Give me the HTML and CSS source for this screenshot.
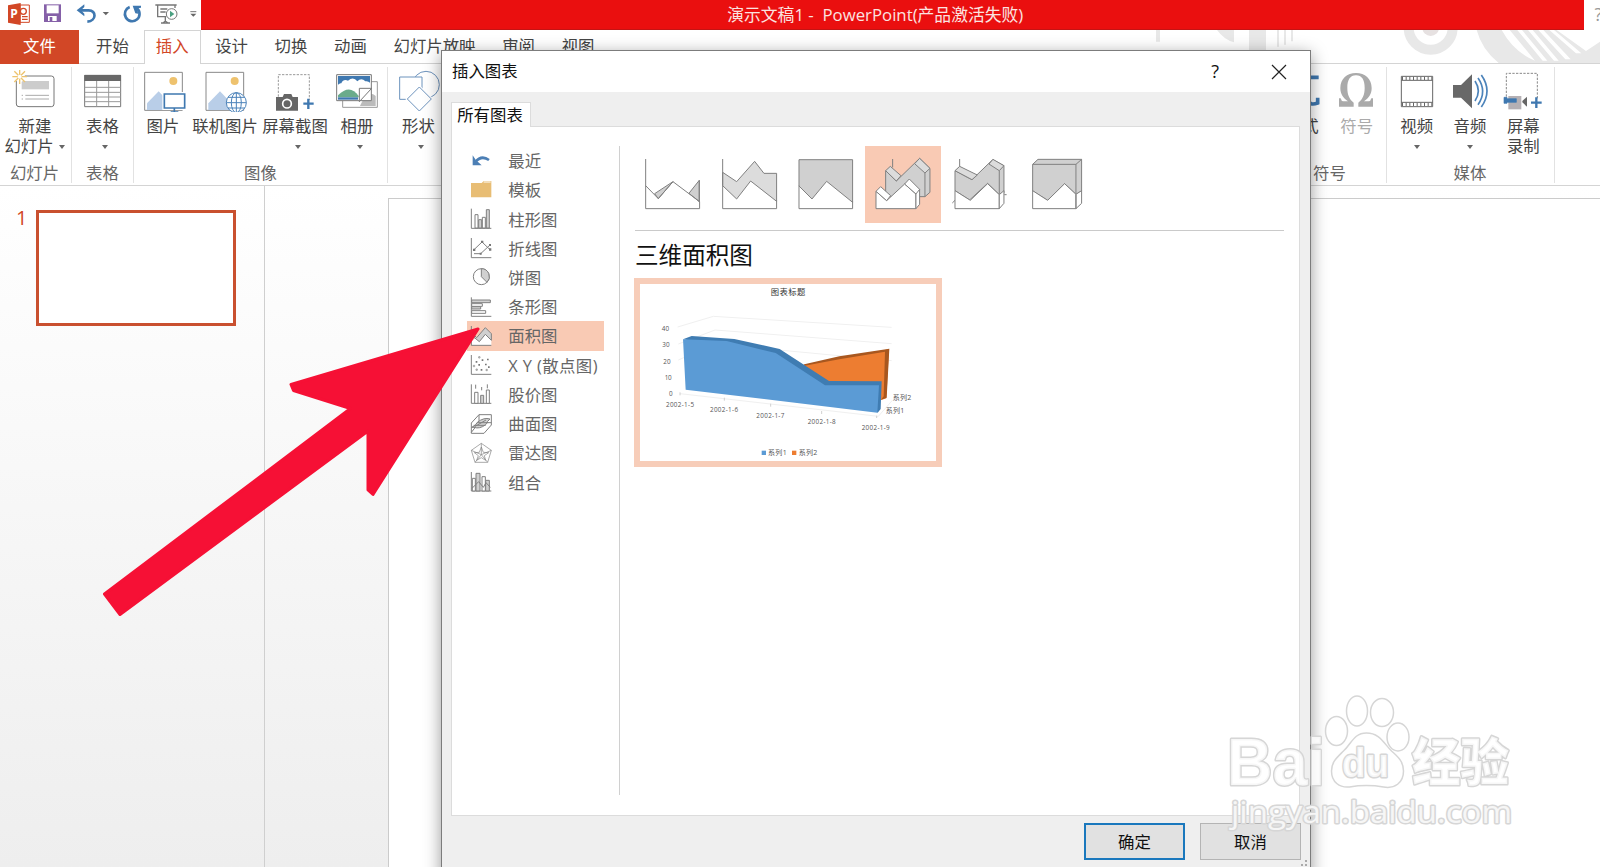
FILE: index.html
```html
<!DOCTYPE html>
<html lang="zh-CN">
<head>
    <meta charset="UTF-8">
    <meta name="viewport" content="width=device-width, initial-scale=1.0">
    <title>演示文稿1 - PowerPoint</title>
    <link rel="stylesheet" href="styles.css">
</head>
<body>
    <div class="app">
        <div class="titlebar">
            <div class="quick-access">
                <svg width="30" height="30" viewBox="18 0 90 90"><path d="M60 15h28v52H60z" fill="#fff" stroke="#d24726" stroke-width="3"/><circle cx="70" cy="34" r="9" fill="none" stroke="#d24726" stroke-width="4"/><path d="M66 50h17M66 58h17" stroke="#d24726" stroke-width="4"/><path d="M24 16l38-7v66l-38-7z" fill="#d24726"/><text x="31" y="54" class="logo-letter">P</text></svg>
                <svg width="34" height="30" viewBox="108 0 102 90"><path d="M132 13h51v53h-51z" fill="#8560a8"/><path d="M140 16h36v24h-36z" fill="#fff"/><path d="M144 48h26v15h-26z" fill="#fff"/><path d="M149 51h8v12h-8z" fill="#8560a8"/></svg>
                <svg width="45" height="30" viewBox="210 0 135 90"><path d="M238 31h28c24 0 24 32-4 34" fill="none" stroke="#3f78b0" stroke-width="8"/><path d="M230 31l23-18v8l-10 10 10 10v8z" fill="#3f78b0"/><path d="M308 36h19l-9.500 10z" fill="#666"/></svg>
                <svg width="33" height="30" viewBox="345 0 99 90"><path d="M389 21a22 22 0 1 0 22 4" fill="none" stroke="#3f78b0" stroke-width="8"/><path d="M398 17h25v6l-10 2 1 16-8-1z" fill="#3f78b0"/></svg>
                <svg width="37" height="30" viewBox="444 0 111 90"><path d="M466 15h64M473 16v34h26M525 16v8M481 27h21M481 36h16M496 51v13M483 69h27M489 69l7-6 8 6" fill="none" stroke="#777" stroke-width="4"/><circle cx="515" cy="42" r="16" fill="#fff" stroke="#777" stroke-width="3"/><path d="M510 32l13 10-13 10z" fill="#4ba182"/></svg>
                <svg width="16" height="30" viewBox="555 0 48 90"><path d="M571 35h18" stroke="#777" stroke-width="3"/><path d="M571 41h18l-9 9z" fill="#666"/></svg>
            </div>
            <div class="window-title">演示文稿1 -  PowerPoint(产品激活失败)</div>
            <div class="window-help">?</div>
        </div>

        <div class="tabs">
            <svg class="tabs-art" width="460" height="33" viewBox="0 90 460 99" preserveAspectRatio="none">
                <g fill="#e8e8e8">
                    <path d="M16 90h4v35h-4zM77 90h17v37q-10-8-17-37zM109 90h17v60h-17zM137 90h2v50h-2zM144 90h2v44h-2zM151 90h2v34h-2z"/>
                </g>
            </svg>
            <svg class="tabs-art" width="220" height="33" viewBox="0 90 660 99">
                <circle cx="152" cy="83" r="66" fill="none" stroke="#e8e8e8" stroke-width="30"/>
                <circle cx="152" cy="83" r="25" fill="#e6e1e1"/>
                <path d="M290 90q15 58 66 99h304v-64l-42 28-88-63z" fill="#e8e8e8"/>
                <path d="M365 90h24l76 92q-64-26-100-92zM412 90h14l76 92h-14zM444 90h14l78 92h-14zM475 90h15l82 88h-16zM508 90h14l82 70h-16z" fill="#fff"/>
            </svg>
            <div class="tab tab-file">文件</div>
            <div class="tab">开始</div>
            <div class="tab tab-active">插入</div>
            <div class="tab">设计</div>
            <div class="tab">切换</div>
            <div class="tab">动画</div>
            <div class="tab">幻灯片放映</div>
            <div class="tab">审阅</div>
            <div class="tab">视图</div>
        </div>

        <div class="ribbon">
            <div class="group group-slides">
                <div class="group-buttons">
                    <div class="tool">
                        <svg viewBox="34 210 144 126"><rect x="50" y="228" width="113" height="92" rx="8" fill="#fff" stroke="#777" stroke-width="3"/><path d="M66 243h82v25H66z" fill="#ccc"/><path d="M66 286h4M77 286h71M66 297h4M77 297h71" stroke="#aaa" stroke-width="3"/><circle cx="60" cy="230" r="16" fill="#fff"/><path d="M60 208v44M38 230h44M44 214l32 32M76 214l-32 32" stroke="#edc36d" stroke-width="4"/><circle cx="60" cy="230" r="6" fill="#fff"/></svg>
                        <span>新建</span>
                        <span class="wide-label">幻灯片<i class="caret caret-inline"></i></span>
                    </div>
                </div>
                <div class="group-name">幻灯片</div>
            </div>
            <div class="group group-table">
                <div class="group-buttons">
                    <div class="tool">
                        <svg viewBox="236 210 144 126"><path d="M253 226h108v94H253z" fill="#fff" stroke="#777" stroke-width="3"/><path d="M252 225h110v18H252z" fill="#686868"/><path d="M289 243v77M325 243v77M253 262h108M253 277h108M253 291h108M253 305h108" stroke="#999" stroke-width="3"/></svg>
                        <span>表格</span>
                        <i class="caret"></i>
                    </div>
                </div>
                <div class="group-name">表格</div>
            </div>
            <div class="group group-image">
                <div class="group-buttons">
                    <div class="tool tool-picture">
                        <svg viewBox="417 210 144 126"><path d="M434 217h113v114H434z" fill="#fff" stroke="#888" stroke-width="3"/><circle cx="520" cy="243" r="12" fill="#eec26e"/><path d="M441 330v-20l35-36 34 36v20z" fill="#b9cee8"/><path d="M492 281h63v44h-63z" fill="#fff" stroke="#fff" stroke-width="10"/><path d="M493 282h61v42h-61zM523 324v11M512 336h23" fill="none" stroke="#3f78b0" stroke-width="5"/></svg>
                        <span>图片</span>
                    </div>
                    <div class="tool tool-online">
                        <svg viewBox="603 210 144 126"><path d="M618 217h113v114H618z" fill="#fff" stroke="#888" stroke-width="3"/><circle cx="704" cy="243" r="12" fill="#eec26e"/><path d="M625 330v-20l35-36 34 36v20z" fill="#b9cee8"/><circle cx="709" cy="308" r="30" fill="#fff" stroke="#4c83ba" stroke-width="3"/><path d="M679 308h60M709 278v60M684 292h50M684 324h50" stroke="#4c83ba" stroke-width="3"/><ellipse cx="709" cy="308" rx="15" ry="30" fill="none" stroke="#4c83ba" stroke-width="3"/></svg>
                        <span>联机图片</span>
                    </div>
                    <div class="tool tool-shot">
                        <svg viewBox="813 210 144 126"><path d="M835 290v-66h93v76" fill="none" stroke="#999" stroke-width="3" stroke-dasharray="7 4"/><path d="M828 291h20l4-9h22l4 9h16v41h-66z" fill="#666"/><circle cx="861" cy="311" r="13" fill="#666" stroke="#fff" stroke-width="5"/><path d="M910 311h31M925 296v31" stroke="#3f78b0" stroke-width="7"/></svg>
                        <span>屏幕截图</span>
                        <i class="caret"></i>
                    </div>
                    <div class="tool tool-album">
                        <svg viewBox="999 210 144 126"><path d="M1028 245h104v77h-104z" fill="#fff" stroke="#999" stroke-width="3"/><path d="M1080 318c15-35 30-45 47-30v30z" fill="#bbb"/><path d="M1010 224h104v78h-104z" fill="#fff" stroke="#777" stroke-width="3"/><path d="M1014 228h96v20q-6-6-14-4-12-12-24 0-12-16-28-2-14-6-20 8-4-2-10 4z" fill="#3f78b0"/><path d="M1014 286c25-25 45-22 62 2v4h-62z" fill="#6aab8b"/><path d="M1014 292h60v7h-60z" fill="#3f78b0"/><path d="M1078 305v-40h37z" fill="#fff" stroke="#777" stroke-width="3"/></svg>
                        <span>相册</span>
                        <i class="caret"></i>
                    </div>
                </div>
                <div class="group-name">图像</div>
            </div>
            <div class="group group-shapes">
                <div class="group-buttons">
                    <div class="tool">
                        <svg viewBox="1182 210 144 126"><circle cx="1275" cy="254" r="40" fill="#fff" stroke="#6d93bd" stroke-width="3"/><path d="M1196 231h67v67h-67z" fill="#fff" stroke="#6d93bd" stroke-width="3"/><path d="M1255 261l36 36-36 36-36-36z" fill="#fff" stroke="#fff" stroke-width="9"/><path d="M1255 261l36 36-36 36-36-36z" fill="#fff" stroke="#6d93bd" stroke-width="3"/></svg>
                        <span>形状</span>
                        <i class="caret"></i>
                    </div>
                </div>
            </div>
            <div class="group group-symbols">
                <div class="group-buttons">
                    <div class="tool">
                        <svg viewBox="414 210 144 126"><path d="M440 232h96M466 232v86M505 232v65q2 22 28 12v-16" fill="none" stroke="#3f78b0" stroke-width="11"/></svg>
                        <span>公式</span>
                    </div>
                    <div class="tool tool-disabled">
                        <svg viewBox="578 210 144 126"><path d="M596 320v-25h5q2 9 8 9h14c-14-10-23-22-23-40 0-28 20-45 47-45s47 17 47 45c0 18-9 30-23 40h14q6 0 8-9h5v25h-44v-12c13-10 19-24 19-44 0-24-8-38-26-38s-26 14-26 38c0 20 6 34 19 44v12z" fill="#aaa"/></svg>
                        <span>符号</span>
                    </div>
                </div>
                <div class="group-name">符号</div>
            </div>
            <div class="group group-media">
                <div class="group-buttons">
                    <div class="tool">
                        <svg viewBox="759 210 144 126"><path d="M784 229h94v91h-94zM784 241h94M784 307h94" fill="#fff" stroke="#666" stroke-width="3"/><path d="M786 235h90M786 313h90" stroke="#666" stroke-width="10" stroke-dasharray="3 8"/></svg>
                        <span>视频</span>
                        <i class="caret caret-media"></i>
                    </div>
                    <div class="tool">
                        <svg viewBox="918 210 144 126"><path d="M939 255h24l33-32v102l-33-32h-24z" fill="#686868"/><path d="M1005 243q20 30 0 60M1014 234q28 40 0 80M1024 225q34 48 0 96" fill="none" stroke="#4c83ba" stroke-width="5"/></svg>
                        <span>音频</span>
                        <i class="caret caret-media"></i>
                    </div>
                    <div class="tool">
                        <svg viewBox="1077 210 144 126"><path d="M1099 290v-70h93v76" fill="none" stroke="#888" stroke-width="3" stroke-dasharray="7 4"/><path d="M1105 288h39v40h-39z" fill="#b5b0b4"/><path d="M1092 292h9v4h28v11h-28v3h-9z" fill="#3f78b0" stroke="#3f78b0" stroke-width="2"/><path d="M1147 303l14-13v30l-14-13z" fill="#666"/><path d="M1173 308h32M1189 292v32" stroke="#3f78b0" stroke-width="7"/></svg>
                        <span>屏幕</span>
                        <span>录制</span>
                    </div>
                </div>
                <div class="group-name">媒体</div>
            </div>
        </div>

        <div class="workspace">
            <div class="slide-list">
                <div class="slide-number">1</div>
                <div class="slide-thumb"></div>
            </div>
            <div class="stage">
                <div class="slide"></div>
            </div>
        </div>

        <div class="dialog">
            <div class="dialog-title">
                <div class="dialog-name">插入图表</div>
                <div class="dialog-help">?</div>
                <svg class="dialog-close" width="16" height="16" viewBox="0 0 16 16"><path d="M1 1l14 14M15 1L1 15" stroke="#222" stroke-width="1.2"/></svg>
            </div>
            <div class="dialog-tab">所有图表</div>
            <div class="panel">
                <div class="type-list">
                    <div class="type">
                        <svg viewBox="88 327 72 72"><path d="M107 366q18-22 41-6" fill="none" stroke="#4c7fb5" stroke-width="8"/><path d="M99 346v30h27l-10-9-8-8z" fill="#4c7fb5"/></svg>
                        最近
                    </div>
                    <div class="type">
                        <svg viewBox="88 415 72 72"><path d="M94 430h32l6-6h23v49H94z" fill="#e8bd74"/><path d="M132 427h21" stroke="#fff" stroke-width="3"/></svg>
                        模板
                    </div>
                    <div class="type">
                        <svg viewBox="88 503 72 72"><path d="M95 508v59h60" class="ln"/><path d="M106 526h9v40h-9zM128 534h9v32h-9z" class="box"/><path d="M117 541h9v25h-9zM140 511h9v55h-9z" class="fill"/></svg>
                        柱形图
                    </div>
                    <div class="type">
                        <svg viewBox="88 590 72 72"><path d="M95 596v59h60M103 631l24-23 24 23M103 643h20l28-26" class="ln"/><path d="M100 628h7v7h-7zM124 604h7v7h-7zM148 627h7v7h-7zM120 640h6v6h-6zM148 614h6v6h-6z" class="dot"/></svg>
                        折线图
                    </div>
                    <div class="type">
                        <svg viewBox="88 -12 72 72"><circle cx="125" cy="23" r="24" class="box"/><path d="M125 23V-1a24 24 0 0 1 17 41z" class="fill"/></svg>
                        饼图
                    </div>
                    <div class="type">
                        <svg viewBox="88 75 72 72"><path d="M95 82v57h60" class="ln"/><path d="M96 90h56v8H96zM96 110h27v7H96z" class="fill"/><path d="M96 101h32v8H96zM96 122h42v8H96z" class="box"/></svg>
                        条形图
                    </div>
                    <div class="type type-selected">
                        <svg viewBox="88 163 72 72"><path d="M97 214l14-12 11 10 18-25 15 20v20H97z" fill="#fff"/><path d="M97 190l14 14 26-30 18 18v20l-18-18-18 22-22-18z" class="fill"/><path d="M95 169v58h60" class="ln"/></svg>
                        面积图
                    </div>
                    <div class="type">
                        <svg viewBox="88 251 72 72"><path d="M95 257v58h60" class="ln"/><path d="M108 275h5v5h-5zM126 270h5v5h-5zM142 268h5v5h-5zM116 284h5v5h-5zM136 283h5v5h-5zM123 299h5v5h-5zM145 291h5v5h-5z" class="dot"/><path d="M117 262h4v4h-4zM101 288h4v4h-4zM109 299h4v4h-4zM139 300h4v4h-4z" class="ln thin"/></svg>
                        <span class="scatter-label">X Y (散点图)</span>
                    </div>
                    <div class="type">
                        <svg viewBox="88 339 72 72"><path d="M95 346v57h60M108 347v12M126 354v10M143 346v12" class="ln"/><path d="M105 370h10v33h-10zM140 363h9v40h-9z" class="box"/><path d="M123 379h9v24h-9z" class="fill"/></svg>
                        股价图
                    </div>
                    <div class="type">
                        <svg viewBox="88 426 72 72"><path d="M95 459l23-25h37v31l-22 25H95zM118 434v24h37M95 487l23-29" class="ln"/><path d="M96 472q12-4 17-15 20-16 38-10-8 6-13 17-18 14-35 8z" class="fill"/><path d="M105 470l34-20M112 458h34M102 466h36" class="ln"/></svg>
                        曲面图
                    </div>
                    <div class="type">
                        <svg viewBox="88 514 72 72"><path d="M125 521l30 21-11 36h-38l-11-36zM125 521v34M155 542l-30 13 19 23M106 578l19-23-30-13" class="ln thin"/><path d="M125 532l6 16 16 1-13 9 4 14-13-8-14 8 5-14-12-9 15-1z" class="ln thin"/></svg>
                        雷达图
                    </div>
                    <div class="type">
                        <svg viewBox="88 602 72 72"><path d="M95 608v57h60" class="ln"/><path d="M98 627h9v38h-9zM127 622h10v43h-10z" class="box"/><path d="M109 612h12v53h-12zM138 633h11v32h-11z" class="fill"/><path d="M97 657l20-20 14 17 8-14 13 14" class="ln"/></svg>
                        组合
                    </div>
                </div>

                <div class="chart-pane">
                    <div class="subtypes">
                        <div class="subtype">
                            <svg viewBox="30 18 230 231"><path d="M89 161l55-36-44 51zM192 160l31-39v64z" class="fill"/><path d="M62 57v149h162v-21l-80-60-44 51-38-39M223 121v64" class="ln"/></svg>
                        </div>
                        <div class="subtype">
                            <svg viewBox="260 18 230 231"><path d="M292 97l42 28 54-61 28 36h38v84l-78-61-42 54-42-40z" class="fill light"/><path d="M292 57v149h162v-24" class="ln"/></svg>
                        </div>
                        <div class="subtype">
                            <svg viewBox="490 18 230 231"><path d="M523 59h161v128l-78-63-44 53-39-39z" class="fill"/><path d="M523 137v69h161v-21" class="ln"/></svg>
                        </div>
                        <div class="subtype subtype-selected">
                            <svg viewBox="719 18 230 231"><path d="M802 57v25" class="ln"/><path d="M781 92l32 31 70-68 31 30v72l-15 13H781z" class="fill"/><path d="M781 92l14-13 32 28-14 16zM868 71l15-16 31 30-15 14zM899 99v71" class="fill light"/><path d="M752 154l32 28 54-50 34 30v44H752z" class="box"/><path d="M752 154l14-14 30 27-12 15zM838 132l14-15 31 31v45l-11 13v-44zM872 162l11-14" class="box"/></svg>
                        </div>
                        <div class="subtype">
                            <svg viewBox="949 18 230 231"><path d="M1005 57v25M983 189l8-8M1139 164h7" class="ln"/><path d="M991 92l51 27 62-60 34 18v83l-14 4-35-34-54 50-44-28z" class="fill"/><path d="M991 92l14-13 53 26-16 14zM1093 72l12-14 33 19-14 15zM1124 92v70" class="fill light"/><path d="M991 152l46 29 52-50 35 33v42H991z" class="box"/><path d="M1124 164l14-12v38l-14 16z" class="box"/></svg>
                        </div>
                        <div class="subtype">
                            <svg viewBox="1178 18 230 231"><path d="M1222 73l16-15h131v95l-17 10-34-32-51 50-45-28z" class="fill"/><path d="M1222 73h130l17-15M1352 73v90" class="ln"/><path d="M1222 152l45 29 51-50 34 32v43h-130zM1352 163l17-11v38l-17 16z" class="box"/></svg>
                        </div>
                    </div>
                    <div class="chart-name">三维面积图</div>
                    <div class="preview">
                        <svg width="296" height="177" viewBox="45 41 888 531">
                            <text x="437" y="75" textLength="104" class="chart-title">图表标题</text>
                            <path d="M158 170l107-32 535 33M160 221l110-42 530 41M160 269l110-48 530 50M165 370l595 68 42-48" class="gridline"/>
                            <path d="M165 366v9M298 382v9M437 400v9M590 422v9M755 436v7" class="gridline tick"/>
                            <path d="M535 284l108-21 149-26-8 147-17 6-167-30z" fill="#ed7d31"/>
                            <path d="M533 286l5-4 105-24 150-23-8 147-17 6 8-10 4-134-137 23-108 20z" fill="#a8571f"/>
                            <path d="M174 207l26-10 128 9 136 30 148 96 158 1-3 83-9 11-14-10V360H590L440 270 300 230z" fill="#3f7cb2"/>
                            <path d="M174 207l131 5 147 36 148 97h162l-5 82-575-69z" fill="#5b9bd5"/>
                            <g class="axis">
                                <text x="110" y="182" textLength="22">40</text>
                                <text x="112" y="231" textLength="22">30</text>
                                <text x="115" y="280" textLength="22">20</text>
                                <text x="119" y="330" textLength="21">10</text>
                                <text x="132" y="377">0</text>
                                <text x="123" y="410" textLength="84">2002-1-5</text>
                                <text x="255" y="426" textLength="84">2002-1-6</text>
                                <text x="394" y="442" textLength="84">2002-1-7</text>
                                <text x="548" y="461" textLength="84">2002-1-8</text>
                                <text x="710" y="480" textLength="84">2002-1-9</text>
                                <text x="803" y="388" textLength="56" class="series">系列2</text>
                                <text x="782" y="427" textLength="56" class="series">系列1</text>
                                <text x="429" y="555" textLength="56" class="series">系列1</text>
                                <text x="521" y="555" textLength="56" class="series">系列2</text>
                            </g>
                            <path d="M410 541h13v13h-13z" fill="#5b9bd5"/>
                            <path d="M501 541h13v13h-13z" fill="#ed7d31"/>
                        </svg>
                    </div>
                </div>
            </div>
            <div class="dialog-actions">
                <button class="btn btn-default">确定</button>
                <button class="btn">取消</button>
            </div>
            <svg class="grip" width="8" height="8" viewBox="0 0 8 8"><path d="M4 0h2v2H4zM4 4h2v2H4zM0 4h2v2H0z" fill="#aaa"/></svg>
        </div>

        <svg class="arrow" width="390" height="300" viewBox="100 324 390 300">
            <path d="M478 329L291 384.500l2.500 6L350.500 408.500 104.500 594l15.500 20.500L368 431v59l5 4.500z" fill="#f61035" stroke="#f61035" stroke-width="3" stroke-linejoin="round"/>
        </svg>

        <svg class="watermark" width="300" height="150" viewBox="1220 690 300 150">
            <g class="mark">
                <text x="1227" y="784.500" textLength="98" lengthAdjust="spacingAndGlyphs" class="mark-bai">Bai</text>
                <ellipse cx="1336.500" cy="731" rx="11" ry="14.500"/>
                <ellipse cx="1357" cy="711" rx="10.500" ry="15"/>
                <ellipse cx="1382" cy="712.500" rx="11.500" ry="14"/>
                <ellipse cx="1398" cy="737" rx="11" ry="14"/>
                <path d="M1366.500 733c-13 0-15 11-23 18-7 7-12 11-12 20 0 11 8 17 18 16 12-2 22-2 34 0 11 2 20-4 20-16 0-9-5-14-12-20-8-8-12-18-25-18z"/>
                <text x="1342" y="777" textLength="47" lengthAdjust="spacingAndGlyphs" class="mark-du">du</text>
                <text x="1412" y="781" textLength="97" lengthAdjust="spacingAndGlyphs" class="mark-cn">经验</text>
                <text x="1231" y="822.500" textLength="281" lengthAdjust="spacingAndGlyphs" class="mark-url">jingyan.baidu.com</text>
            </g>
        </svg>
    </div>
</body>
</html>
```
FILE: styles.css
```css
* {
    margin: 0;
    padding: 0;
    box-sizing: border-box;
}

body {
    font-family: "Open Sans", "Noto Sans CJK SC", sans-serif;
    font-size: 16.4px;
    color: #444;
    overflow: hidden;
}

svg {
    display: block;
    flex-shrink: 0;
}

.app {
    position: relative;
    width: 1600px;
    height: 867px;
    background: #fff;
    overflow: hidden;
    display: flex;
    flex-direction: column;
}

/* title bar */
.titlebar {
    height: 30px;
    display: flex;
}

.quick-access {
    width: 201px;
    padding-left: 6px;
    display: flex;
}

.logo-letter {
    font: bold 36px "Open Sans", sans-serif;
    fill: #fff;
}

.window-title {
    width: 1382.5px;
    padding-right: 34px;
    background: #ea0f0f;
    border-bottom: 1px solid #c41414;
    color: #fbe3e0;
    font-size: 16.8px;
    line-height: 29px;
    text-align: center;
    white-space: pre;
}

.window-help {
    padding-left: 11px;
    width: 16px;
    overflow: hidden;
    color: #999;
    font-size: 18px;
    line-height: 28px;
}

/* ribbon tabs */
.tabs {
    position: relative;
    height: 34px;
    display: flex;
    gap: 2.5px;
    border-bottom: 1px solid #d4d4d4;
}

.tabs-art {
    position: absolute;
    right: 0;
    top: 0;
}

.tab {
    height: 33px;
    padding: 0 12.1px;
    line-height: 32px;
    white-space: nowrap;
}

.tab-file {
    width: 79px;
    height: 34px;
    margin-right: 2.5px;
    background: #d24726;
    color: #fff;
    text-align: center;
}

.tab-active {
    height: 34px;
    margin-left: 0.7px;
    background: #fff;
    border: 1px solid #d4d4d4;
    border-bottom: none;
    padding: 0 11px 0 10.6px;
    line-height: 30px;
    color: #d24726;
}

/* ribbon */
.ribbon {
    height: 122px;
    display: flex;
    border-bottom: 1px solid #d4d4d4;
}

.group {
    height: 116px;
    margin-top: 3px;
    padding-top: 3px;
    border-right: 1px solid #e2e2e2;
    display: flex;
    flex-direction: column;
    justify-content: space-between;
}

.group-buttons {
    display: flex;
}

.group-name {
    color: #666;
    line-height: 20px;
    text-align: center;
}

.group-slides {
    width: 72px;
}

.group-slides .tool {
    width: 70px;
    flex: none;
}

.group-slides .group-name {
    padding-right: 2px;
}

.wide-label {
    margin-left: -1px;
}

.group-table {
    width: 62px;
}

.group-image {
    width: 254px;
}

.group-shapes {
    width: 61px;
    border-right: none;
}

.group-symbols {
    width: 114px;
    margin-left: auto;
    padding-left: 2px;
    padding-right: 2px;
}

.group-media {
    width: 168px;
    margin-right: 45px;
    padding-left: 3px;
    padding-right: 4px;
}

.tool {
    flex: 1;
    display: flex;
    flex-direction: column;
    align-items: center;
    line-height: 20px;
    white-space: nowrap;
}

.tool svg {
    width: 48px;
    height: 42px;
    margin-bottom: 4px;
}

.tool-disabled {
    color: #aaa;
}

.tool-picture {
    flex: 0 0 58px;
}

.tool-online {
    flex: 0 0 66px;
}

.tool-shot {
    flex: 0 0 74px;
}

.tool-album {
    flex: 0 0 50px;
}

.caret {
    display: block;
    margin: 9px 0 0 5px;
    border: 3.5px solid transparent;
    border-top: 4px solid #666;
    border-bottom: none;
}

.caret-inline {
    display: inline-block;
    margin: 0 0 3px 5px;
}

.caret-media {
    margin-left: 0;
}

/* workspace */
.workspace {
    flex: 1;
    display: flex;
    background: linear-gradient(#fff, #eee);
}

.slide-list {
    width: 265px;
    padding: 24px 0 0 16px;
    border-right: 1px solid #cfcfcf;
    display: flex;
}

.slide-number {
    width: 20px;
    color: #d24726;
    font-size: 20px;
    line-height: 16px;
}

.slide-thumb {
    width: 200px;
    height: 116px;
    background: #fff;
    border: 3px solid #c9502f;
}

.stage {
    flex: 1;
    padding: 12px 0 0 123px;
}

.slide {
    height: 100%;
    background: #fff;
    border: 1px solid #cbcbcb;
    border-right: none;
    border-bottom: none;
}

/* chart dialog */
.dialog {
    position: absolute;
    left: 441px;
    top: 50px;
    width: 870px;
    height: 830px;
    background: #efefef;
    border: 1px solid #7c7c7c;
    box-shadow: 0 4px 16px rgba(0, 0, 0, 0.4);
    color: #111;
}

.dialog-title {
    height: 41px;
    padding: 0 23px 0 10px;
    background: #fff;
    display: flex;
    align-items: center;
    line-height: 39px;
}

.dialog-name {
    flex: 1;
    height: 41px;
}

.dialog-help {
    margin-right: 52px;
    font-size: 18px;
}

.dialog-tab {
    position: relative;
    width: 80px;
    height: 25px;
    margin: 10px 0 -1px 9px;
    padding-right: 2px;
    background: #fff;
    border: 1px solid #dcdcdc;
    border-bottom: none;
    line-height: 23px;
    text-align: center;
}

.panel {
    width: 849px;
    height: 690px;
    margin-left: 9px;
    padding: 19px 0 0 15px;
    background: #fff;
    border: 1px solid #dcdcdc;
    display: flex;
}

.type-list {
    width: 153px;
    height: 649px;
    border-right: 1px solid #d0d0d0;
    color: #666;
}

.type {
    width: 137px;
    height: 29.23px;
    padding-left: 2.3px;
    display: flex;
    align-items: center;
    gap: 15px;
    white-space: nowrap;
    line-height: 29px;
}

.type svg {
    width: 24px;
    height: 24px;
}

.scatter-label {
    letter-spacing: 0.4px;
}

.type-selected,
.subtype-selected {
    background: #f9cab4;
}

.ln {
    fill: none;
    stroke: #808080;
    stroke-width: 3;
}

.thin {
    stroke-width: 2;
}

.box {
    fill: #fff;
    stroke: #808080;
    stroke-width: 3;
}

.fill {
    fill: #d0d0d0;
    stroke: #808080;
    stroke-width: 3;
}

.light {
    fill: #dcdcdc;
}

.dot {
    fill: #777;
}

.chart-pane {
    width: 664px;
    padding-left: 14px;
}

.subtypes {
    width: 649px;
    height: 85px;
    margin-left: 1px;
    border-bottom: 1px solid #cacaca;
    display: flex;
}

.subtype {
    width: 76.6px;
    height: 77px;
}

.subtype svg {
    width: 100%;
    height: 100%;
}

.chart-name {
    height: 47px;
    padding-left: 1px;
    font-size: 23.6px;
    line-height: 49px;
}

.preview {
    width: 308px;
    height: 189px;
    border: 6px solid #f7cdb9;
}

.chart-title {
    font-size: 25px;
    fill: #333;
}

.axis {
    font-size: 19px;
    fill: #555;
}

.series {
    font-size: 21px;
}

.gridline {
    fill: none;
    stroke: #f0f0f0;
    stroke-width: 3;
}

.tick {
    stroke: #d0d0d0;
}

.dialog-actions {
    width: 859px;
    padding-top: 7px;
    display: flex;
    justify-content: flex-end;
    gap: 15px;
}

.btn {
    width: 101px;
    height: 37px;
    padding-bottom: 2px;
    background: #e1e1e1;
    border: 1px solid #b4b4b4;
    color: #111;
    font: inherit;
}

.btn-default {
    border: 2px solid #1a78bd;
}

.grip {
    position: absolute;
    right: 1px;
    top: 809px;
}

/* pointer arrow over the dialog */
.arrow {
    position: absolute;
    left: 100px;
    top: 324px;
}

.watermark {
    position: absolute;
    left: 1220px;
    top: 690px;
}

.mark {
    fill: #fff;
    fill-opacity: 0.8;
    stroke: #d6d6d6;
    stroke-width: 1.5;
    stroke-linejoin: round;
}

.mark text {
    paint-order: stroke;
    stroke-width: 3;
}

.mark-bai {
    font: bold 66px "Liberation Sans", sans-serif;
}

.mark-du {
    font: bold 41px "Liberation Sans", sans-serif;
}

.mark-cn {
    font: 900 51px "Noto Sans CJK SC", sans-serif;
}

.mark-url {
    font: 30.5px "Open Sans", sans-serif;
}
```
